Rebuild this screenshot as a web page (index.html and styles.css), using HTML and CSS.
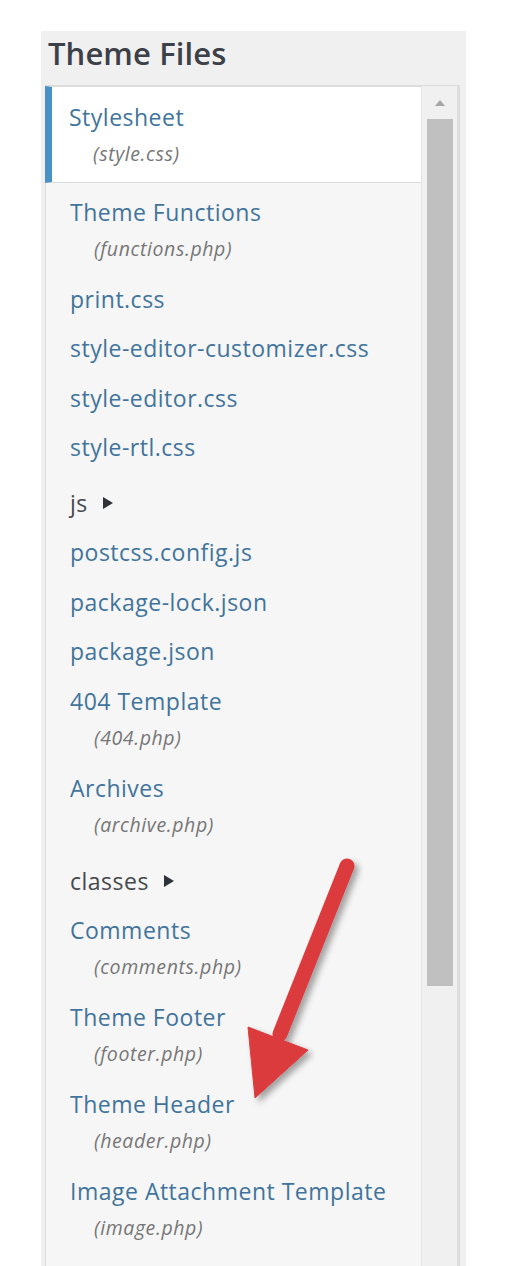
FILE: index.html
```html
<!DOCTYPE html>
<html lang="en">
<head>
<meta charset="utf-8">
<title>Theme Files</title>
<link rel="stylesheet" href="styles.css">
</head>
<body>
<div class="panel">
  <h2 class="title">Theme Files</h2>
  <div class="filebox">
    <ul class="tree">
      <li class="item current"><span class="name">Stylesheet</span><span class="sub">(style.css)</span></li>
      <li class="item"><span class="name">Theme Functions</span><span class="sub">(functions.php)</span></li>
      <li class="item"><span class="name">print.css</span></li>
      <li class="item"><span class="name">style-editor-customizer.css</span></li>
      <li class="item"><span class="name">style-editor.css</span></li>
      <li class="item"><span class="name">style-rtl.css</span></li>
      <li class="item folder"><span class="name">js<span class="caret"></span></span></li>
      <li class="item"><span class="name">postcss.config.js</span></li>
      <li class="item"><span class="name">package-lock.json</span></li>
      <li class="item"><span class="name">package.json</span></li>
      <li class="item"><span class="name">404 Template</span><span class="sub">(404.php)</span></li>
      <li class="item"><span class="name">Archives</span><span class="sub">(archive.php)</span></li>
      <li class="item folder"><span class="name">classes<span class="caret"></span></span></li>
      <li class="item"><span class="name">Comments</span><span class="sub">(comments.php)</span></li>
      <li class="item"><span class="name">Theme Footer</span><span class="sub">(footer.php)</span></li>
      <li class="item"><span class="name">Theme Header</span><span class="sub">(header.php)</span></li>
      <li class="item"><span class="name">Image Attachment Template</span><span class="sub">(image.php)</span></li>
    </ul>
    <div class="scrollbar">
      <div class="sb-btn">
        <svg width="12" height="8" viewBox="0 0 12 8"><polygon points="6,1 11,7 1,7" fill="#a4a6a8"/></svg>
      </div>
      <div class="sb-thumb"></div>
    </div>
  </div>
</div>
<svg class="arrow" width="150" height="280" viewBox="0 0 150 280">
  <defs>
    <filter id="sh" x="-30%" y="-30%" width="160%" height="160%">
      <feDropShadow dx="4" dy="4" stdDeviation="3" flood-color="#000" flood-opacity="0.35"/>
    </filter>
  </defs>
  <g filter="url(#sh)" fill="#dc3a3d" stroke="#dc3a3d">
    <line x1="117" y1="26" x2="50" y2="194" stroke-width="15" stroke-linecap="round"/>
    <polygon points="18,187 78,210 25,258" stroke-width="1" stroke-linejoin="round"/>
  </g>
</svg>
</body>
</html>
```

FILE: styles.css
```css
html, body {
  margin: 0;
  padding: 0;
  height: 1266px;
  overflow: hidden;
  background: #ffffff;
}
body {
  position: relative;
  font-family: "Open Sans", "Noto Sans", sans-serif;
}
.panel {
  margin: 31px 0 0 41px;
  width: 425px;
  height: 1235px;
  background: #f0f0f0;
  padding: 2px 0 0 4px;
  box-sizing: border-box;
  display: flex;
  flex-direction: column;
}
.title {
  margin: 0 0 12px 0;
  padding-left: 3px;
  font-size: 31px;
  line-height: 40px;
  font-weight: 600;
  color: #3c4048;
  letter-spacing: 0.1px;
}
.filebox {
  flex: 1;
  width: 415px;
  box-sizing: border-box;
  border: 1px solid #dcdcdc;
  border-bottom: none;
  background: #f6f6f6;
  display: flex;
}
.tree {
  list-style: none;
  margin: 0;
  padding: 0;
  flex: 1;
}
.item {
  display: flex;
  flex-direction: column;
  padding: 7px 0 6.5px 24px;
}
.item .name {
  font-size: 23px;
  line-height: 36px;
  letter-spacing: 0.5px;
  color: #41749c;
  white-space: nowrap;
}
.item .sub {
  font-size: 19.5px;
  line-height: 37.5px;
  letter-spacing: 0.6px;
  font-style: italic;
  color: #767676;
  padding-left: 24px;
}
.item.current {
  background: #ffffff;
  border: 1px solid #dddddd;
  border-left: 7px solid #4a91c6;
  padding: 12px 0 9px 17px;
  margin: 0 -1px 4px -1px;
}
.item.folder {
  margin-top: 6px;
}
.item.folder .name {
  color: #45484c;
  display: flex;
  align-items: center;
}
.caret {
  display: inline-block;
  width: 0;
  height: 0;
  border-left: 10px solid #2f3237;
  border-top: 6px solid transparent;
  border-bottom: 6px solid transparent;
  margin-left: 15px;
}
.scrollbar {
  width: 35px;
  border-left: 1px solid #e4e4e4;
  border-right: 2px solid #dfdfdf;
  background: #f0f0f0;
  display: flex;
  flex-direction: column;
  align-items: center;
}
.sb-btn {
  height: 33px;
  width: 100%;
  display: flex;
  align-items: center;
  justify-content: center;
}
.sb-thumb {
  width: 26px;
  height: 867px;
  background: #c0c0c0;
}
.arrow {
  position: absolute;
  left: 230px;
  top: 840px;
}
```
